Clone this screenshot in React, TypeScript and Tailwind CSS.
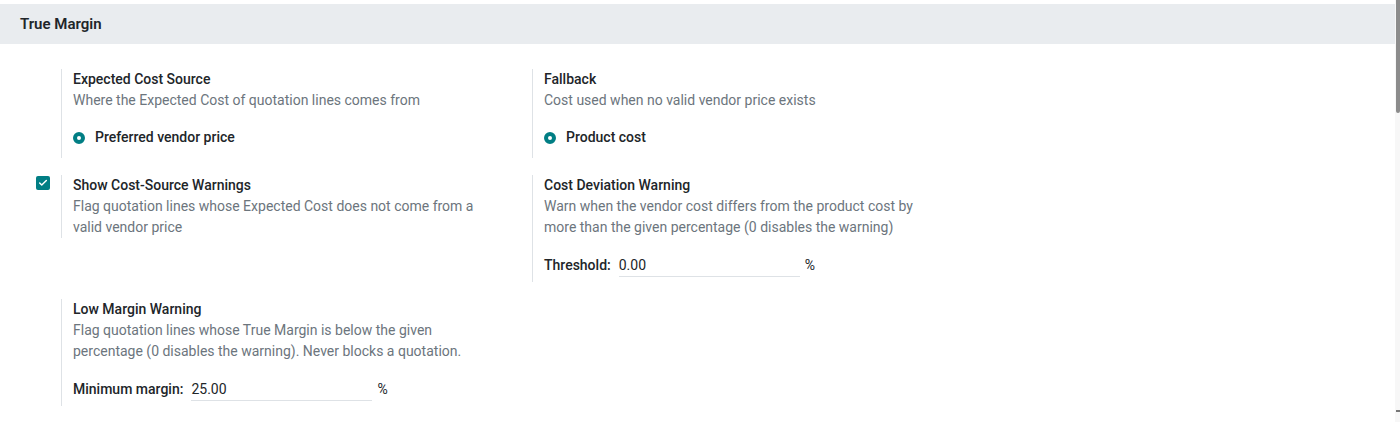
import { Check } from "lucide-react";

const FONT = { fontFamily: "Roboto, 'Noto Sans', sans-serif" };

function Radio({ label }: { label: string }) {
  return (
    <div className="mt-4 flex h-[21px] items-center gap-[10px]">
      <span className="block h-[12px] w-[12px] rounded-full border-[4px] border-[#017e84] bg-white" />
      <span className="text-[14px] font-medium text-[#212529]">{label}</span>
    </div>
  );
}

function NumberField({ label, value }: { label: string; value: string }) {
  return (
    <div className="mt-4 flex h-[23px] items-center">
      <span className="text-[14px] font-medium text-[#212529]">{label}</span>
      <div className="ml-2 flex h-[23px] w-[181px] items-center border-b border-[#dee2e6] text-[14px] text-[#212529]">
        {value}
      </div>
      <span className="ml-[5px] text-[14px] text-[#212529]">%</span>
    </div>
  );
}

function SettingBox({
  title,
  desc,
  checked,
  children,
  bottom = 0,
}: {
  title: string;
  desc: string;
  checked?: boolean;
  children?: React.ReactNode;
  bottom?: number;
}) {
  return (
    <div className="flex items-start">
      <div className="flex w-[41px] shrink-0 justify-end pr-[11px] pt-[1px]">
        {checked && (
          <span className="flex h-[14px] w-[14px] items-center justify-center rounded-[2px] bg-[#017e84]">
            <Check size={10} strokeWidth={3.5} className="text-white" />
          </span>
        )}
      </div>
      <div
        className={`min-w-0 flex-1 border-l border-[#dee2e6] pl-[11px] pr-4 leading-[21px] ${
          bottom === 10 ? "pb-[10px]" : bottom === 5 ? "pb-[5px]" : ""
        }`}
      >
        <div className="text-[14px] font-medium text-[#212529]">{title}</div>
        <div className="text-[14px] text-[#6c757d]">{desc}</div>
        {children}
      </div>
    </div>
  );
}

export default function App() {
  return (
    <div className="flex h-[422px] w-[1400px] overflow-hidden bg-white" style={FONT}>
      <div className="min-w-0 flex-1 pt-1">
        <div className="flex h-10 items-center bg-[#e9ecef] px-5">
          <h2 className="text-[15px] font-semibold text-[#212529]">True Margin</h2>
        </div>

        <div className="ml-5 mt-[25px] grid grid-cols-[471px_472px] gap-y-[17px]">
          <SettingBox
            title="Expected Cost Source"
            desc="Where the Expected Cost of quotation lines comes from"
            bottom={10}
          >
            <Radio label="Preferred vendor price" />
          </SettingBox>
          <SettingBox title="Fallback" desc="Cost used when no valid vendor price exists" bottom={10}>
            <Radio label="Product cost" />
          </SettingBox>

          <SettingBox
            title="Show Cost-Source Warnings"
            desc="Flag quotation lines whose Expected Cost does not come from a valid vendor price"
            checked
          />
          <SettingBox
            title="Cost Deviation Warning"
            desc="Warn when the vendor cost differs from the product cost by more than the given percentage (0 disables the warning)"
            bottom={5}
          >
            <NumberField label="Threshold:" value="0.00" />
          </SettingBox>

          <SettingBox
            title="Low Margin Warning"
            desc="Flag quotation lines whose True Margin is below the given percentage (0 disables the warning). Never blocks a quotation."
            bottom={5}
          >
            <NumberField label="Minimum margin:" value="25.00" />
          </SettingBox>
        </div>
      </div>

      <div className="flex w-[5px] shrink-0 flex-col items-end bg-[#f7f7f7]">
        <div className="h-[113px] w-[4px] rounded-b-sm bg-[#8c8c8c]" />
        <div className="flex-1" />
        <div className="mb-[10px] h-[2px] w-[4px] bg-[#777]" />
      </div>
    </div>
  );
}
